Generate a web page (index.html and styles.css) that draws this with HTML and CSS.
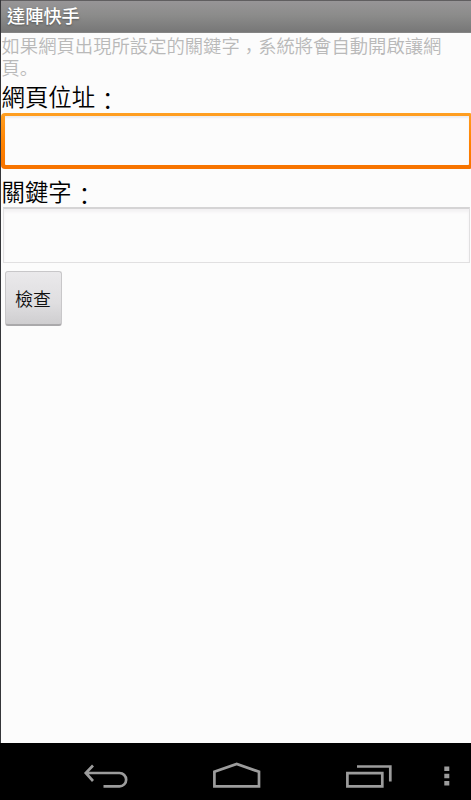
FILE: index.html
```html
<!DOCTYPE html>
<html lang="zh-Hant">
<head>
<meta charset="utf-8">
<title>達陣快手</title>
<link rel="stylesheet" href="styles.css">
</head>
<body>
<div class="screen">
  <header class="title-bar">達陣快手</header>
  <main class="content">
    <p class="hint">如果網頁出現所設定的關鍵字<span class="comma">，</span>系統將會自動開啟讓網頁<span class="stop" lang="ja">。</span></p>
    <label class="label label-url" for="url">網頁位址<span class="colon">：</span></label>
    <div class="focus-ring"><input class="field-focused" id="url" type="text"></div>
    <label class="label label-key" for="key">關鍵字<span class="colon">：</span></label>
    <input class="field" id="key" type="text">
    <button class="check" type="button">檢查</button>
  </main>
</div>
<nav class="nav-bar">
  <svg width="471" height="57" viewBox="0 743 471 57" fill="none" stroke="#9c9c9c" stroke-width="2.7">
    <path d="M86 773H119.500a6.600 6.600 0 0 1 0 13.300H103.500M93 765.500L85.800 773L93 781"/>
    <path d="M214.400 786.300V771.800L236.700 764L259 771.800V786.300Z"/>
    <path d="M347.400 773.200H382.300V786.300H347.400ZM357 766.500H390.300V781.500"/>
    <path d="M444.300 768.700H449.300M444.300 776H449.300M444.300 783.200H449.300" stroke-width="4.600"/>
  </svg>
</nav>
</body>
</html>
```
FILE: styles.css
```css
* { box-sizing: border-box; }
body {
  margin: 0;
  width: 471px;
  height: 800px;
  overflow: hidden;
  display: flex;
  flex-direction: column;
  background: #000;
  font-family: "Noto Sans CJK TC", sans-serif;
}
.screen {
  flex: 1;
  border-left: 1px solid #35363a;
  background: #fcfcfc;
}
.title-bar {
  height: 33px;
  padding-left: 6px;
  border-top: 1px solid #605e60;
  border-bottom: 1px solid #858585;
  background: linear-gradient(#979597, #8c8c8b 45%, #777);
  color: #fff;
  font-size: 18.2px;
  font-weight: 500;
  line-height: 28px;
  text-shadow: 0 1px 2px #555;
}
.content {
  display: flex;
  flex-direction: column;
  align-items: flex-start;
}
.hint {
  margin: 1px 0 0;
  padding-left: 0.5px;
  width: 450px;
  color: #b9b9b9;
  font-size: 18.33px;
  font-weight: 350;
  line-height: 22px;
}
.comma { position: relative; top: 5px; }
.stop { font-family: "Noto Sans CJK JP", sans-serif; }
.colon { position: relative; top: 4px; left: 1px; }
.label {
  padding-left: 0.5px;
  color: #000;
  font-size: 23.4px;
  font-weight: 350;
  line-height: 28px;
}
.label-url { margin-top: 4px; }
.label-key { margin-top: 8px; }
.focus-ring {
  width: 470px;
  height: 56px;
  margin-top: 3px;
  padding: 3px 2px 4px 4px;
  border-radius: 4px 1px 1px 4px;
  background: linear-gradient(#ff9f22, #ff8200 55%, #f77300);
}
.field-focused, .field {
  display: block;
  padding: 0 8px;
  border: 0;
  outline: 0;
  font: 18px "Noto Sans CJK TC", sans-serif;
}
.field-focused {
  width: 100%;
  height: 49px;
  border-radius: 1px;
  background: #fcfcfc;
  box-shadow: inset 0 2px 2px #eeedf0;
}
.field {
  width: 467px;
  height: 56px;
  margin: 2px 0 0 2px;
  border: 1px solid #e1e0e1;
  border-top: 2px solid #d5d4d5;
  background: #fcfcfc;
  box-shadow: inset 0 3px 3px #f3f1f3;
}
.check {
  width: 57px;
  height: 55px;
  margin: 8px 0 0 4px;
  padding: 0 1px 0 0;
  border: 1px solid #c8c7c9;
  border-bottom: 2px solid #aaa9ab;
  border-radius: 3px;
  background: linear-gradient(#eae9eb, #dfdee0 60%, #cfced0);
  color: #111;
  font: 350 18px "Noto Sans CJK TC", sans-serif;
}
.nav-bar { height: 57px; background: #000; }
.nav-bar svg { display: block; }
```
